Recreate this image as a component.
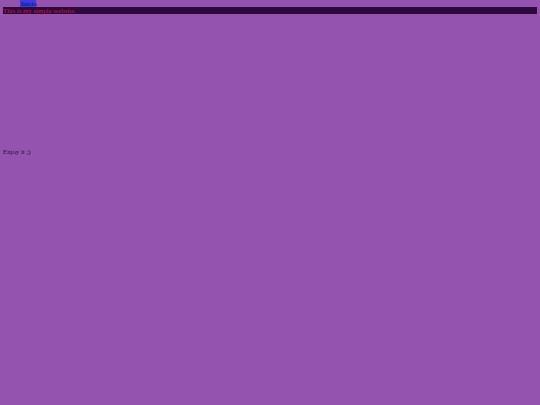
export default function App() {
  return (
    <div className="min-h-[405px] bg-[#9453ae] font-['Liberation_Serif',serif] text-[6.8px] leading-[9px] text-[#2a1030]">
      <div className="h-[7px] overflow-hidden">
        <span className="ml-[20px] block h-[7px] w-[16px] bg-[#3c3ce6] pl-[1px] pt-[1px] leading-[6px] text-[#0c0c50]">Inicio</span>
      </div>
      <div className="mx-[3px] h-[7px] overflow-hidden bg-[#2c0a3c] leading-[7px] text-[#c8163c]">
        This is my simple website.
      </div>
      <p className="mt-[133px] ml-[3px]">Enjoy it ;)</p>
    </div>
  );
}
